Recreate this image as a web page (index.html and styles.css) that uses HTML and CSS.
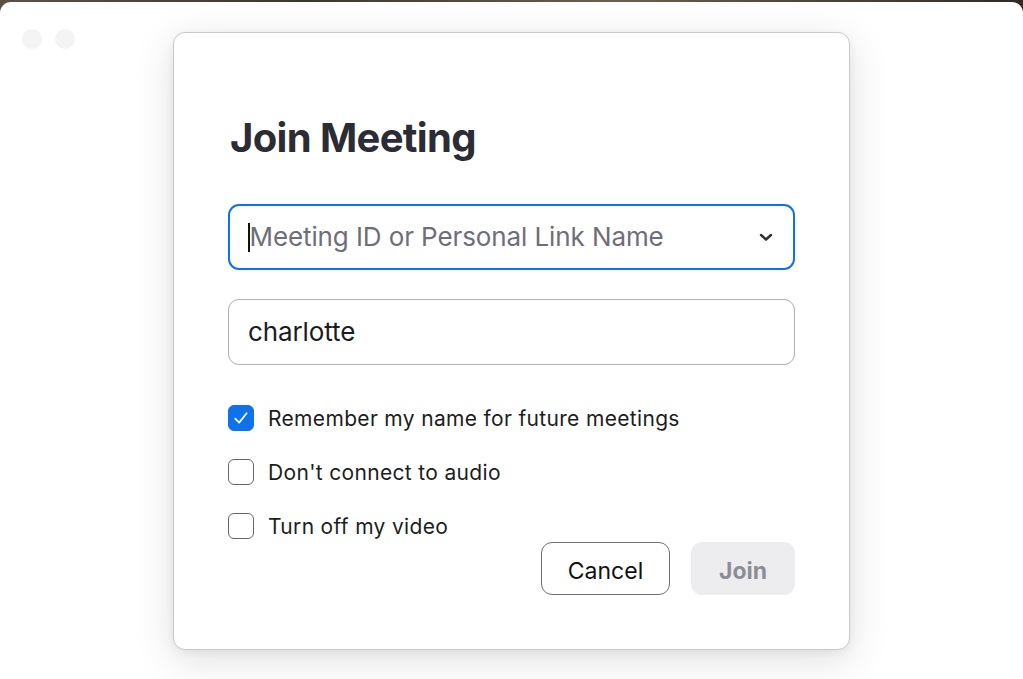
FILE: index.html
```html
<!DOCTYPE html>
<html>
<head>
<meta charset="utf-8">
<link rel="stylesheet" href="styles.css">
</head>
<body>
<div class="window">
  <div class="traffic">
    <span class="dot"></span>
    <span class="dot"></span>
  </div>
  <div class="dialog">
    <h1 class="title">Join Meeting</h1>
    <div class="field field-active">
      <span class="caret"></span>
      <span class="placeholder">Meeting ID or Personal Link Name</span>
      <svg class="chevron" width="14" height="9" viewBox="0 0 14 9"><path d="M2 2 L7 6.5 L12 2" fill="none" stroke="#2f2f36" stroke-width="2.4" stroke-linecap="round" stroke-linejoin="round"/></svg>
    </div>
    <div class="field field-name">
      <span class="value">charlotte</span>
    </div>
    <div class="options">
      <label class="option">
        <span class="box box-checked">
          <svg width="20" height="20" viewBox="0 0 20 20"><path d="M4.2 10.6 L8.2 14.6 L15.6 5.2" fill="none" stroke="#fff" stroke-width="1.7" stroke-linecap="round" stroke-linejoin="round"/></svg>
        </span>
        <span class="label">Remember my name for future meetings</span>
      </label>
      <label class="option">
        <span class="box"></span>
        <span class="label">Don't connect to audio</span>
      </label>
      <label class="option">
        <span class="box"></span>
        <span class="label">Turn off my video</span>
      </label>
    </div>
    <div class="actions">
      <button class="btn btn-cancel">Cancel</button>
      <button class="btn btn-join">Join</button>
    </div>
  </div>
</div>
</body>
</html>
```

FILE: styles.css
```css
html, body {
  margin: 0;
  padding: 0;
}
body {
  width: 1023px;
  height: 679px;
  overflow: hidden;
  background: linear-gradient(90deg, #5b5146 0%, #3d362f 30%, #6a604f 60%, #2f2a26 100%);
  font-family: Inter, "Noto Sans", "Liberation Sans", sans-serif;
}
.window {
  position: relative;
  margin-top: 2px;
  height: 687px;
  background: #ffffff;
  border-radius: 11px;
  padding-top: 30px;
  box-sizing: border-box;
}
.traffic {
  position: absolute;
  top: 27px;
  left: 22px;
  display: flex;
  gap: 13px;
}
.dot {
  width: 20px;
  height: 20px;
  border-radius: 50%;
  background: #f4f4f4;
}
.dialog {
  margin-left: 173px;
  width: 677px;
  height: 618px;
  box-sizing: border-box;
  border: 1px solid #c9c9cc;
  border-radius: 12px;
  background: #fff;
  box-shadow: 0 10px 40px rgba(0, 0, 0, 0.13), 0 2px 8px rgba(0, 0, 0, 0.06);
  padding: 83px 54px 0 54px;
  display: flex;
  flex-direction: column;
}
.title {
  margin: 0 0 44px 2px;
  font-size: 40px;
  line-height: 44px;
  font-weight: 700;
  color: #2c2c35;
  letter-spacing: -0.65px;
}
.field {
  height: 66px;
  box-sizing: border-box;
  border-radius: 11px;
  display: flex;
  align-items: center;
  padding: 0 20px 2px 19px;
  font-size: 26px;
  letter-spacing: -0.1px;
}
.field-active {
  border: 2px solid #0e72ed;
  padding-left: 18px;
}
.field-name {
  margin-top: 29px;
  border: 1px solid #aeaeb5;
}
.caret {
  width: 1.5px;
  height: 29px;
  background: #111;
  margin-top: 2px;
}
.placeholder {
  color: #6e6e78;
  flex: 1;
}
.chevron {
  margin-right: 0;
  margin-top: 3px;
}
.value {
  color: #1c1c1f;
}
.options {
  margin-top: 40px;
  display: flex;
  flex-direction: column;
  gap: 28px;
}
.option {
  display: flex;
  align-items: center;
  height: 26px;
  gap: 14px;
}
.box {
  width: 26px;
  height: 26px;
  box-sizing: border-box;
  border: 1.5px solid #66666f;
  border-radius: 6px;
  background: #fff;
  display: flex;
  align-items: center;
  justify-content: center;
}
.box-checked {
  background: #0e72ed;
  border-color: #0e72ed;
}
.label {
  font-size: 21px;
  color: #1d1d21;
  letter-spacing: 0.33px;
}
.actions {
  margin-top: 3px;
  display: flex;
  justify-content: flex-end;
  gap: 21px;
}
.btn {
  height: 53px;
  box-sizing: border-box;
  border-radius: 11px;
  font-family: Inter, "Noto Sans", "Liberation Sans", sans-serif;
  font-size: 23px;
  padding: 4px 0 0 0;
  cursor: default;
}
.btn-cancel {
  width: 129px;
  background: #fff;
  border: 1px solid #6f6f78;
  color: #111;
}
.btn-join {
  width: 104px;
  background: #ededf0;
  border: none;
  color: #8d8d95;
  font-weight: 700;
}
```
